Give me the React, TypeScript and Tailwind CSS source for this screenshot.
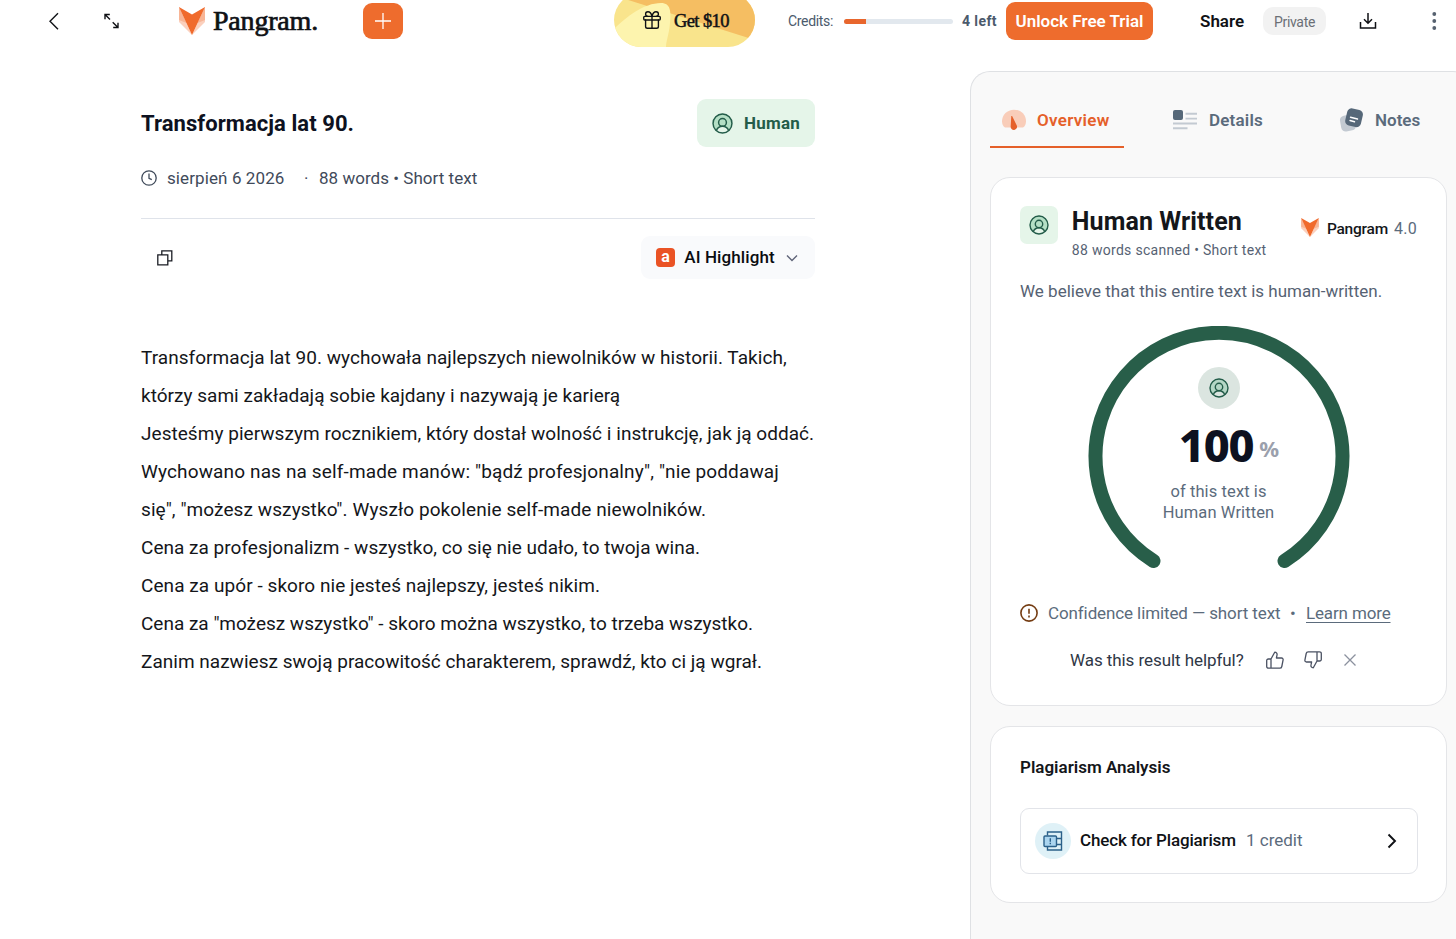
import type { ReactNode } from "react";
import { Gift } from "lucide-react";

function FoxMark({ className }: { className: string }) {
  return (
    <svg viewBox="0 0 26 28" className={className}>
      <path d="M0 0 13 28 0 15Z" fill="#fbd0bd" />
      <path d="M26 0 13 28 26 15Z" fill="#fbd0bd" />
      <path d="M0 0 7.500 16 0 13Z" fill="#f8b596" />
      <path d="M26 0 18.500 16 26 13Z" fill="#f8b596" />
      <path d="M0 0 13 7.500 26 0 13 28Z" fill="#f06a2c" />
    </svg>
  );
}

function HumanIcon({ className, fill }: { className: string; fill: string }) {
  return (
    <svg viewBox="0 0 20 20" className={className} fill="none" stroke="currentColor" strokeWidth="1.400">
      <path d="M4.300 16.500a9 9 0 1 1 11.400 0C14.600 14.200 12.500 12.900 10 12.900s-4.600 1.300-5.700 3.600Z" fill={fill} stroke="none" />
      <circle cx="10" cy="10" r="9" />
      <circle cx="10" cy="9" r="3.700" />
      <path d="M4.200 16.700c1-2.500 3.300-4 5.800-4s4.800 1.500 5.800 4" />
    </svg>
  );
}

function ThumbIcon({ className }: { className: string }) {
  return (
    <svg viewBox="0 0 18 18" className={className} fill="none" stroke="currentColor" strokeWidth="1.300" strokeLinejoin="round">
      <path d="M5 8 8.700 1.200c1.800 0 2.700 1.300 2.300 2.900L10.400 7h5.200c1 0 1.700.9 1.500 1.900l-1.300 6.600c-.2 1-1 1.700-2 1.700H2.500c-1 0-1.800-.8-1.800-1.800V9.600C.7 8.700 1.400 8 2.300 8H5v9.200" />
    </svg>
  );
}

function Header() {
  return (
    <header className="flex h-[42px] shrink-0 items-center whitespace-nowrap text-[#0f1115]">
      <svg viewBox="0 0 12 18" className="ml-[48px] h-[18px] w-[12px]" fill="none" stroke="currentColor" strokeWidth="1.400">
        <path d="M10 1.200 2 9.200l8 8" />
      </svg>
      <svg viewBox="0 0 16 16" className="ml-[43px] h-[16px] w-[17px]" fill="none" stroke="currentColor" strokeWidth="1.400">
        <path d="M1.500 6.300V1.500h4.800M1.500 1.500 6.500 6.500M14.500 9.700v4.800H9.700M14.500 14.500 9.200 9.200" />
      </svg>
      <FoxMark className="ml-[59px] h-[28px] w-[26px]" />
      <span className="ml-[8px] w-[105px] font-['Liberation_Serif',serif] text-[28px] leading-[32px] tracking-[-0.200px] [-webkit-text-stroke:0.700px]">
        Pangram.
      </span>
      <button className="ml-[45px] flex h-[36px] w-[40px] items-center justify-center rounded-[9px] bg-[#ee6c2d] text-white">
        <svg viewBox="0 0 16 16" className="size-[16px]" fill="none" stroke="currentColor" strokeWidth="1.300">
          <path d="M8 0v16M0 8h16" />
        </svg>
      </button>
      <button className="relative -mt-[2px] ml-[211px] flex h-[54px] w-[141px] shrink-0 items-center overflow-hidden rounded-full">
        <svg viewBox="0 0 141 54" className="absolute inset-0 size-full">
          <path d="M0 0h141v54H0Z" fill="#f9e48c" />
          <path d="M-8 0 141 47V0Z" fill="#f5be62" />
          <path d="M0 36C12 24 30 10 47 10c10 0 10 9 9 20-1 12-4 18-4 24H0Z" fill="#fdf4ae" />
        </svg>
        <Gift className="relative ml-[27px] size-[22px]" strokeWidth={1.500} />
        <span className="relative ml-[11px] pt-[4px] font-['Liberation_Serif',serif] text-[18.500px] tracking-[-0.600px] [-webkit-text-stroke:0.500px]">
          Get $10
        </span>
      </button>
      <span className="ml-[33px] w-[46px] pt-px text-[14px] tracking-[-0.330px] text-[#4b5a6c]">Credits:</span>
      <div className="ml-[10px] h-[5px] w-[109px] overflow-hidden rounded-full bg-[#e2e8ee]">
        <div className="h-full w-[22px] bg-[#e8662d]" />
      </div>
      <span className="ml-[9px] w-[36px] pt-px text-[14px] font-bold tracking-[0.400px] text-[#4b5a6c]">4 left</span>
      <button className="ml-[8px] h-[38px] w-[147px] rounded-[9px] bg-[#ee6c2d] pt-[2px] text-[17px] font-semibold text-white">
        Unlock Free Trial
      </button>
      <span className="ml-[47px] w-[45px] pt-[2px] text-[17px] font-semibold">Share</span>
      <span className="ml-[18px] flex h-[28px] w-[63px] items-center justify-center rounded-[10px] bg-[#f2f2f2] pt-[2px] text-[14px] tracking-[-0.300px] text-[#6b6f76]">
        Private
      </span>
      <svg viewBox="0 0 18 18" className="ml-[33px] size-[18px]" fill="none" stroke="currentColor" strokeWidth="1.500">
        <path d="M9 1v10M5 7.200l4 4 4-4M1.500 10v6h15v-6" />
      </svg>
      <svg viewBox="0 0 6 20" className="ml-[54px] h-[20px] w-[6px]" fill="#56616f">
        <circle cx="3.300" cy="3" r="1.900" />
        <circle cx="3.300" cy="10" r="1.900" />
        <circle cx="3.300" cy="17" r="1.900" />
      </svg>
    </header>
  );
}

function Article() {
  return (
    <article className="ml-[141px] mt-[57px] w-[674px] shrink-0 whitespace-nowrap">
      <div className="flex h-[48px] items-center justify-between">
        <h1 className="text-[22px] font-bold tracking-[0.060px] text-[#0d1120]">Transformacja lat 90.</h1>
        <span className="flex h-[48px] w-[118px] items-center rounded-[9px] bg-[#e5f5e9] text-[#235c49]">
          <HumanIcon className="ml-[15px] size-[21px]" fill="#b4dfc5" />
          <span className="ml-[11px] pt-[2px] text-[17px] font-bold tracking-[0.220px]">Human</span>
        </span>
      </div>
      <div className="mt-[19px] flex h-[24px] items-center text-[17px] text-[#3f4a5a]">
        <svg viewBox="0 0 16 16" className="size-[16px]" fill="none" stroke="currentColor" strokeWidth="1.300">
          <circle cx="8" cy="8" r="7.200" />
          <path d="M8 3.600v4.700l2.800 1.400" />
        </svg>
        <span className="ml-[10px] w-[118px] pt-[2px] tracking-[0.100px]">sierpień 6 2026</span>
        <span className="ml-[19px] w-[5px] pt-[2px]">·</span>
        <span className="ml-[10px] pt-[2px] tracking-[0.030px]">88 words • Short text</span>
      </div>
      <div className="mt-[28px] h-px bg-[#dfe3ea]" />
      <div className="mt-[17px] flex h-[43px] items-center justify-between">
        <svg viewBox="0 0 16 16" className="ml-[16px] size-[16px] text-[#1a1d24]" fill="none" stroke="currentColor" strokeWidth="1.300">
          <path d="M.8 4.800h10v10H.800ZM4.800 4.800v-4h10v10h-4" />
        </svg>
        <button className="flex h-[43px] w-[174px] items-center rounded-[9px] bg-[#f9fafc]">
          <span className="ml-[15px] flex size-[19px] items-center justify-center rounded-[4px] bg-[#ea5325] pb-[2px] text-[16px] leading-none font-bold text-white">
            a
          </span>
          <span className="ml-[9px] w-[91px] text-[17px] font-medium tracking-[0.100px] text-[#0a0c10]">AI Highlight</span>
          <svg viewBox="0 0 12 8" className="ml-[11px] h-[8px] w-[12px]" fill="none" stroke="#5f6478" strokeWidth="1.400">
            <path d="m1 1.500 5 5 5-5" />
          </svg>
        </button>
      </div>
      <div className="mt-[60px] text-[19px] leading-[38px] text-[#14161a]">
        <p className="tracking-[0.047px]">Transformacja lat 90. wychowała najlepszych niewolników w historii. Takich,</p>
        <p className="tracking-[0.025px]">którzy sami zakładają sobie kajdany i nazywają je karierą</p>
        <p className="tracking-[0.040px]">Jesteśmy pierwszym rocznikiem, który dostał wolność i instrukcję, jak ją oddać.</p>
        <p className="tracking-[0.138px]">Wychowano nas na self-made manów: "bądź profesjonalny", "nie poddawaj</p>
        <p className="tracking-[0.098px]">się", "możesz wszystko". Wyszło pokolenie self-made niewolników.</p>
        <p className="tracking-[0.017px]">Cena za profesjonalizm - wszystko, co się nie udało, to twoja wina.</p>
        <p className="tracking-[0.064px]">Cena za upór - skoro nie jesteś najlepszy, jesteś nikim.</p>
        <p className="tracking-[-0.009px]">Cena za "możesz wszystko" - skoro można wszystko, to trzeba wszystko.</p>
        <p className="tracking-[0.017px]">Zanim nazwiesz swoją pracowitość charakterem, sprawdź, kto ci ją wgrał.</p>
      </div>
    </article>
  );
}

function Card({ className, children }: { className: string; children: ReactNode }) {
  return (
    <section className={`w-[457px] rounded-[20px] border border-[#e4e5e8] bg-white px-[29px] whitespace-nowrap ${className}`}>
      {children}
    </section>
  );
}

function Tabs() {
  return (
    <nav className="flex h-[76px] items-center text-[17px] font-semibold text-[#5b6b7c]">
      <div className="flex h-[76px] w-[134px] items-center border-b-2 border-[#e5602a] pt-[22px] text-[#e5602a]">
        <svg viewBox="0 0 24 22" className="ml-[12px] h-[22px] w-[24px]">
          <path d="M3 18.500C1 17.500 0 15 0 12.300 0 5.800 5.200.7 12 .7s12 5.100 12 11.600c0 2.700-1 5.200-3 6.200Z" fill="#f9cdb9" />
          <path d="m9.300 7 .8 0 4.700 9.500a3.200 3.200 0 1 1-6.100.8Z" fill="#e5602a" />
        </svg>
        <span className="ml-[11px] pt-px tracking-[0.290px]">Overview</span>
      </div>
      <div className="ml-[49px] flex items-center pt-[20px]">
        <svg viewBox="0 0 25 20" className="h-[20px] w-[25px]">
          <rect x="0" y="0" width="10" height="10" rx="2" fill="#566879" />
          <path d="M12.500 3.800H24M12.500 8.600H24M0 13.500H24M0 18.300h14.500" stroke="#c3cad2" strokeWidth="1.900" />
        </svg>
        <span className="ml-[11px] w-[55px] pt-px tracking-[0.200px]">Details</span>
      </div>
      <div className="ml-[75px] flex items-center pt-[20px]">
        <svg viewBox="0 0 24 24" className="h-[24px] w-[24px]">
          <rect x="1.500" y="7" width="15" height="16" rx="4.500" transform="rotate(-10 9 15)" fill="#c3cad2" />
          <rect x="7" y="1" width="16" height="17.500" rx="4.500" transform="rotate(13 15 10)" fill="#566879" />
          <path d="m11.500 9.200 7 1.800M11 12.500l4.500 1.200" stroke="#fff" strokeWidth="1.400" strokeLinecap="round" />
        </svg>
        <span className="ml-[12px] pt-px">Notes</span>
      </div>
    </nav>
  );
}

function ResultCard() {
  return (
    <Card className="mt-[29px] h-[529px]">
      <div className="flex h-[84px] pt-[28px]">
        <span className="flex size-[38px] items-center justify-center rounded-[7px] bg-[#e5f5e9] text-[#235c49]">
          <HumanIcon className="size-[20px]" fill="#b4dfc5" />
        </span>
        <div className="ml-[14px] w-[230px]">
          <h2 className="mt-px text-[25px] leading-[30px] font-bold tracking-[0.100px] text-[#14161a]">Human Written</h2>
          <p className="mt-[3px] text-[14px] leading-[20px] tracking-[0.290px] text-[#566273]">88 words scanned • Short text</p>
        </div>
        <FoxMark className="mt-[12px] h-[19px] w-[18px]" />
        <span className="ml-[8px] mt-[11px] w-[61px] text-[15.500px] leading-[24px] font-medium tracking-[-0.230px] text-[#14161a]">Pangram</span>
        <span className="ml-[6px] mt-[11px] text-[16px] leading-[24px] tracking-[0.300px] text-[#5b6b7c]">4.0</span>
      </div>
      <p className="mt-[17px] text-[17px] leading-[24px] tracking-[0.010px] text-[#566273]">
        We believe that this entire text is human-written.
      </p>
      <div className="relative mt-[23px] h-[244px]">
        <svg viewBox="0 0 262 244" className="absolute top-0 left-[68px] h-[244px] w-[262px]" fill="none">
          <path d="M65.500 235A123.500 123.500 0 1 1 196.500 235" stroke="#285e49" strokeWidth="14" strokeLinecap="round" />
        </svg>
        <div className="relative flex flex-col items-center pt-[41px]">
          <span className="flex size-[42px] items-center justify-center rounded-full bg-[#dbe5e0] text-[#235c49]">
            <HumanIcon className="size-[20px]" fill="#b4d6c5" />
          </span>
          <div className="mt-[9px] ml-[21px] flex items-baseline leading-[54px]">
            <span className="font-['Noto_Sans',sans-serif] text-[45px] font-extrabold tracking-[-1.200px] text-[#0d1120]">100</span>
            <span className="relative -top-[5px] ml-[6px] font-['Noto_Sans',sans-serif] text-[22px] font-bold text-[#9ba0ac]">%</span>
          </div>
          <p className="mt-px text-center text-[16.500px] leading-[21px] tracking-[0.100px] text-[#5b6b7c]">
            of this text is
            <br />
            Human Written
          </p>
        </div>
      </div>
      <div className="mt-[30px] flex h-[26px] items-center text-[17px] text-[#5b6b7c]">
        <svg viewBox="0 0 18 18" className="size-[18px]" fill="none" stroke="#743c12" strokeWidth="1.600">
          <circle cx="9" cy="9" r="8.100" />
          <path d="M9 4.800v5M9 11.600v1.900" />
        </svg>
        <span className="ml-[10px] w-[232px] pt-px tracking-[-0.110px]">Confidence limited — short text</span>
        <span className="ml-[10px] w-[6px] pt-px">•</span>
        <a className="ml-[10px] pt-px tracking-[-0.150px] underline decoration-1 underline-offset-[3px]">Learn more</a>
      </div>
      <div className="mt-[22px] ml-[50px] flex h-[24px] items-center text-[17px] text-[#2f3746]">
        <span className="w-[174px] pt-[2px] tracking-[-0.070px]">Was this result helpful?</span>
        <ThumbIcon className="ml-[22px] size-[18px] text-[#4b5263]" />
        <ThumbIcon className="ml-[20px] size-[18px] rotate-180 text-[#4b5263]" />
        <svg viewBox="0 0 12 12" className="ml-[22px] size-[12px]" stroke="#8b919e" strokeWidth="1.300">
          <path d="m.5.5 11 11m0-11-11 11" />
        </svg>
      </div>
    </Card>
  );
}

function PlagiarismCard() {
  return (
    <Card className="mt-[20px] h-[177px]">
      <h3 className="mt-[28px] text-[17px] leading-[24px] font-semibold text-[#14161a]">Plagiarism Analysis</h3>
      <button className="mt-[29px] flex h-[66px] w-[398px] items-center rounded-[9px] border border-[#e2e4e9] text-[17px]">
        <span className="ml-[14px] flex size-[36px] items-center justify-center rounded-full bg-[#dff1f7]">
          <svg viewBox="0 0 20 20" className="size-[20px]" fill="none" stroke="#2b6089" strokeWidth="1.400">
            <path d="M4.500 4.500V1h14v18h-14v-3.500M13.500 7.500h5M13.500 13.500h5" />
            <rect x="1" y="5" width="12.500" height="10.500" rx="1" fill="#abd5ef" />
            <path d="M7.300 7.200v3.600M7.300 11.800v1.500" />
          </svg>
        </span>
        <span className="ml-[9px] w-[156px] text-left font-medium tracking-[-0.150px] text-[#0f1115]">Check for Plagiarism</span>
        <span className="ml-[10px] w-[58px] text-left text-[#5b6b7c]">1 credit</span>
        <svg viewBox="0 0 10 16" className="ml-[83px] h-[16px] w-[10px]" fill="none" stroke="#0f1115" strokeWidth="1.900">
          <path d="m1.500 1.500 6.500 6.500-6.500 6.500" />
        </svg>
      </button>
    </Card>
  );
}

export default function App() {
  return (
    <div className="flex h-[939px] w-full flex-col overflow-hidden bg-white font-['Roboto',sans-serif]">
      <Header />
      <main className="flex min-h-0 flex-1">
        <Article />
        <aside className="mt-[29px] ml-[155px] w-[503px] shrink-0 rounded-t-[20px] border border-b-0 border-[#dfe1e4] bg-[#f9f9f9] pl-[19px]">
          <Tabs />
          <ResultCard />
          <PlagiarismCard />
        </aside>
      </main>
    </div>
  );
}
